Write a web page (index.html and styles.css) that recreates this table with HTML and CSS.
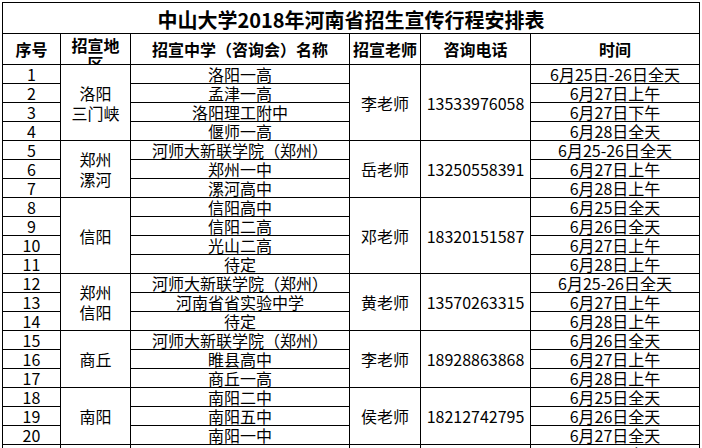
FILE: index.html
```html
<!DOCTYPE html>
<html lang="zh-CN">
<head>
<meta charset="utf-8">
<title>中山大学2018年河南省招生宣传行程安排表</title>
<link rel="stylesheet" href="styles.css">
</head>
<body>
<div class="sheet">
  <div class="c title">中山大学2018年河南省招生宣传行程安排表</div>

  <div class="c hd">序号</div>
  <div class="c hd wrap">招宣地<br>区</div>
  <div class="c hd">招宣中学（咨询会）名称</div>
  <div class="c hd">招宣老师</div>
  <div class="c hd">咨询电话</div>
  <div class="c hd">时间</div>

  <!-- group 1 -->
  <div class="c num">1</div>
  <div class="c two s4">洛阳<br>三门峡</div>
  <div class="c">洛阳一高</div>
  <div class="c s4">李老师</div>
  <div class="c num s4">13533976058</div>
  <div class="c">6月25日-26日全天</div>
  <div class="c num">2</div>
  <div class="c">孟津一高</div>
  <div class="c">6月27日上午</div>
  <div class="c num">3</div>
  <div class="c">洛阳理工附中</div>
  <div class="c">6月27日下午</div>
  <div class="c num">4</div>
  <div class="c">偃师一高</div>
  <div class="c">6月28日全天</div>

  <!-- group 2 -->
  <div class="c num">5</div>
  <div class="c two s3">郑州<br>漯河</div>
  <div class="c">河师大新联学院（郑州）</div>
  <div class="c s3">岳老师</div>
  <div class="c num s3">13250558391</div>
  <div class="c">6月25-26日全天</div>
  <div class="c num">6</div>
  <div class="c">郑州一中</div>
  <div class="c">6月27日上午</div>
  <div class="c num">7</div>
  <div class="c">漯河高中</div>
  <div class="c">6月28日上午</div>

  <!-- group 3 -->
  <div class="c num">8</div>
  <div class="c s4">信阳</div>
  <div class="c">信阳高中</div>
  <div class="c s4">邓老师</div>
  <div class="c num s4">18320151587</div>
  <div class="c">6月25日全天</div>
  <div class="c num">9</div>
  <div class="c">信阳二高</div>
  <div class="c">6月26日全天</div>
  <div class="c num">10</div>
  <div class="c">光山二高</div>
  <div class="c">6月27日上午</div>
  <div class="c num">11</div>
  <div class="c">待定</div>
  <div class="c">6月28日上午</div>

  <!-- group 4 -->
  <div class="c num">12</div>
  <div class="c two s3">郑州<br>信阳</div>
  <div class="c">河师大新联学院（郑州）</div>
  <div class="c s3">黄老师</div>
  <div class="c num s3">13570263315</div>
  <div class="c">6月25-26日全天</div>
  <div class="c num">13</div>
  <div class="c">河南省省实验中学</div>
  <div class="c">6月27日上午</div>
  <div class="c num">14</div>
  <div class="c">待定</div>
  <div class="c">6月28日上午</div>

  <!-- group 5 -->
  <div class="c num">15</div>
  <div class="c s3">商丘</div>
  <div class="c">河师大新联学院（郑州）</div>
  <div class="c s3">李老师</div>
  <div class="c num s3">18928863868</div>
  <div class="c">6月26日全天</div>
  <div class="c num">16</div>
  <div class="c">睢县高中</div>
  <div class="c">6月27日上午</div>
  <div class="c num">17</div>
  <div class="c">商丘一高</div>
  <div class="c">6月28日上午</div>

  <!-- group 6 -->
  <div class="c num">18</div>
  <div class="c s3">南阳</div>
  <div class="c">南阳二中</div>
  <div class="c s3">侯老师</div>
  <div class="c num s3">18212742795</div>
  <div class="c">6月25日全天</div>
  <div class="c num">19</div>
  <div class="c">南阳五中</div>
  <div class="c">6月26日全天</div>
  <div class="c num">20</div>
  <div class="c">南阳一中</div>
  <div class="c">6月27日全天</div>

  <!-- row 21 (cut by the window) -->
  <div class="c num">21</div>
  <div class="c"></div>
  <div class="c"></div>
  <div class="c"></div>
  <div class="c num"></div>
  <div class="c">6月28日全天</div>
</div>
</body>
</html>
```

FILE: styles.css
```css
html, body {
  margin: 0;
  padding: 0;
  background: #fff;
}

body {
  width: 702px;
  height: 448px;
  overflow: hidden;
}

.sheet {
  margin: 2px 0 0 2px;
  width: 698px;
  box-sizing: border-box;
  display: grid;
  grid-template-columns: 57px 69px 218px 70px 109px 168px;
  grid-template-rows: 30px 30px repeat(21, 18px);
  gap: 1px;
  padding: 1px;
  background: #000;
  font-family: "Noto Sans CJK SC", sans-serif;
  font-size: 16px;
  color: #000;
}

.c {
  background: #fff;
  display: flex;
  align-items: center;
  justify-content: center;
  text-align: center;
  line-height: 18px;
  white-space: nowrap;
}

.title {
  grid-column: 1 / -1;
  font-weight: 700;
  font-size: 20px;
  line-height: 22px;
  padding-top: 4px;
  box-sizing: border-box;
}

.hd {
  font-weight: 700;
  font-size: 16px;
}

.wrap {
  align-items: flex-start;
  padding-top: 2px;
  box-sizing: border-box;
  overflow: hidden;
}

.two {
  line-height: 20px;
}

.s3 {
  grid-row: span 3;
}

.s4 {
  grid-row: span 4;
}
```
